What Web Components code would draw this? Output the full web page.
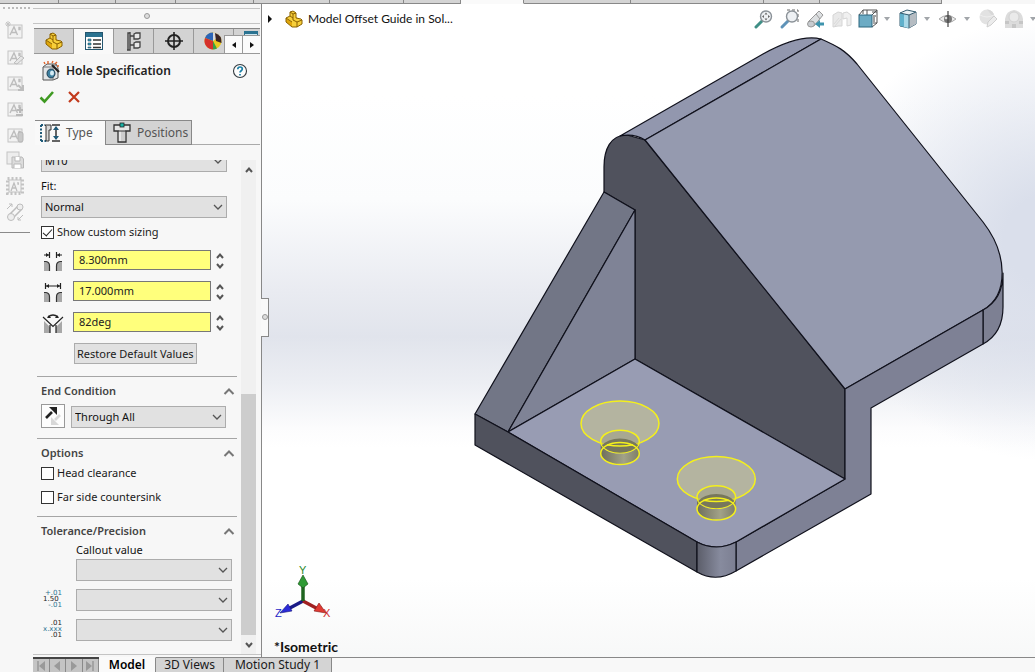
<!DOCTYPE html>
<html lang="en">
<head>
<meta charset="utf-8">
<meta name="viewport" content="width=device-width, initial-scale=1">
<title>Hole Specification</title>
<style>
  html, body { height: 100%; margin: 0; }
  body { font: 11px/20px "Noto Sans", "Open Sans", sans-serif; color: #1a1a1a; background: #f7f7f7; overflow: hidden; }
</style>
</head>
<body>
<cad-app></cad-app>

<script>
/* ---------- icons ---------- */
const PART = `<path d="M1 8 7 12V17L1 12Z" fill="#e0a70c"/><path d="M1 8 5 6 5 2 9 1 11 3 11 7 17 10 17 14 12 17 7 17 7 12Z" fill="#f7cf3a"/>
  <path d="M1 8 5 6V2L8 1 11 3V8L16 9 17 10V14L12 17H7L1 12ZM5 6 8 8M8 4 11 3M8 4V10L12 12 17 10M8 4 5 2M12 12V17M1 8 7 12" fill="none" stroke="#8a6100" stroke-linejoin="round"/>`;
const LENS = (c, e) => `<path d="M2 18 8 12" stroke="${c}" stroke-width="3" stroke-linecap="round"/><circle cx="12" cy="7.500" r="5.500" fill="#eef1f4" stroke="#8b9298" stroke-width="1.400"/>${e}`;
const NOTE = e => `<rect x="2" y="4" width="14" height="13" fill="#f2f2f2" stroke="#c3c3c3"/><path d="M4 14 8 6 11.500 14M5.500 11.500H10M13 6.500v2h1v-2z" fill="none" stroke="#bdbdbd" stroke-width="1.400"/>${e}`;
const DIM = e => `<path d="M1 20V11H3Q7 11 7 15V20ZM19 20V11H17Q13 11 13 15V20Z" fill="#a8a8a8"/><path d="M1 10.500H3Q6.500 11 6.500 15V20M19 10.500H17Q13.500 11 13.500 15V20" fill="none" stroke="#333" stroke-width="1.200"/>${e}`;
const ICONS = {
  part: [18, 18, PART],
  list: [18, 18, `<rect x=".5" y=".5" width="17" height="17" fill="#fff" stroke="#24566f"/><rect x="1" y="1" width="16" height="4" fill="#2b7391"/><path d="M3 7h3v2H3zM3 11h3v2H3zM3 15h3v1H3z" fill="#3aa0bf" stroke="#1f4c60" stroke-width=".6"/><path d="M8 8h8M8 12h8M8 15.500h8" stroke="#333" stroke-width="1.300"/>`],
  config: [16, 20, `<path d="M4 1V19H1M4 2H2V19M4 5H8M4 14H8" fill="none" stroke="#444" stroke-width="1.400"/><path d="M8 3 10 2H14V7L12 8H8ZM8 12 10 11H14V16L12 17H8Z" fill="#e8e8e8" stroke="#444" stroke-width="1.300"/>`],
  target: [18, 18, `<circle cx="9" cy="9" r="6" fill="none" stroke="#222" stroke-width="2"/><path d="M9 0V18M0 9H18" stroke="#222" stroke-width="1.600"/>`],
  ball: [18, 18, `<circle cx="9" cy="9" r="8.500" fill="#e9c81e"/><path d="M9 9 1 6A8.500 8.500 0 0 1 9 .5Z" fill="#2c65b8"/><path d="M9 .5A8.500 8.500 0 0 1 16 4L9 9Z" fill="#d9d9d9"/><path d="M11 1Q18 3 17.500 11L12 9Z" fill="#3a2424"/><path d="M1 6 9 9 9 17.500A8.500 8.500 0 0 1 1 6Z" fill="#d5302b"/><path d="M9 9V17.500A8.500 8.500 0 0 0 13 16.500Z" fill="#37a046"/>`],
  display: [14, 10, `<rect x=".5" y=".5" width="13" height="9" fill="#cfe6ef" stroke="#2b7391"/><path d="M1 2H13" stroke="#2b7391" stroke-width="2"/>`],
  wizard: [20, 20, `<path d="M2 6 6 3H15L17 7V17L12 19H2Z" fill="#e3e5e7" stroke="#555"/><path d="M2 6H12V19M12 6 16 3" fill="none" stroke="#777"/><ellipse cx="10" cy="12.500" rx="4" ry="4.500" fill="#3d7fa0" stroke="#1d3d50"/><ellipse cx="11" cy="12" rx="2" ry="2.500" fill="#d6ecf5"/><path d="M11 4 18 11" stroke="#222" stroke-width="2.200"/><path d="M3 1l1 2M7 0v3M12 0l-1 2M16 1l-2 2M18 5h-2" stroke="#e0622a" stroke-width="1.400"/>`],
  help: [16, 16, `<circle cx="8" cy="8" r="6.500" fill="#fdfdfd" stroke="#333b40" stroke-width="1.100"/><path d="M5.800 6.200C5.800 3.200 10.300 3.400 10.300 6 10.300 7.700 8 7.800 8 9.600M8 11V12.500" fill="none" stroke="#1a7fa6" stroke-width="1.700"/>`],
  ok: [16, 14, `<path d="M1.500 7.500 5.500 11.500 14 2" fill="none" stroke="#3f9a22" stroke-width="2.600"/>`],
  cancel: [12, 12, `<path d="M1 1 11 11M11 1 1 11" stroke="#c23a1c" stroke-width="2.200"/>`],
  type: [20, 18, `<path d="M1 1V18M1 1H5M1 17H6" stroke="#1f5a78" stroke-width="2" stroke-dasharray="2 1.500"/><path d="M5 1H11V6H9V17H6V2Z" fill="#d8d8d8" stroke="#333"/><path d="M12 1H20M12 17H20M16 3V15" stroke="#333" stroke-width="1.500"/><path d="M16 2 19 6H13ZM16 16 19 12H13Z" fill="#1f5a78"/>`],
  positions: [18, 20, `<path d="M1 2H17V8H13V19H5V8H1Z" fill="#e6e6e6" stroke="#333" stroke-width="1.300"/><path d="M9 8V18M11 8V18" stroke="#b5b5b5"/><rect x="7" y="0" width="4" height="4" fill="#19b3a6" stroke="#222" stroke-width=".8"/><path d="M5 8H13" stroke="#333"/>`],
  chev: [10, 6, `<path d="M1 1 5 5 9 1" fill="none" stroke="#555" stroke-width="1.300"/>`],
  chevUp: [12, 7, `<path d="M1.500 6 6 1.500 10.500 6" fill="none" stroke="#777" stroke-width="2"/>`],
  spinUp: [8, 6, `<path d="M1 5 4 1.500 7 5" fill="none" stroke="#555" stroke-width="2"/>`],
  spinDown: [8, 6, `<path d="M1 1 4 4.500 7 1" fill="none" stroke="#555" stroke-width="2"/>`],
  left: [4, 6, `<path d="M4 0V6L0 3Z" fill="#111"/>`],
  right: [4, 6, `<path d="M0 0V6L4 3Z" fill="#111"/>`],
  tree: [4, 8, `<path d="M0 0V8L4 4Z" fill="#111"/>`],
  caret: [6, 4, `<path d="M0 0H6L3 4Z" fill="#a2a6aa"/>`],
  flip: [20, 20, `<path d="M3 12 9 6" stroke="#222" stroke-width="2.600"/><path d="M6 1H14V9Z" fill="#222"/><path d="M17 9 12 14" stroke="#d8d8d8" stroke-width="2.600"/><path d="M8 11V19H16Z" fill="#d8d8d8"/>`],
  dimA: [20, 20, DIM(`<path d="M1 4H6M6.500 1V7M19 4H14M13.500 1V7" stroke="#222" stroke-width="1.200"/><path d="M6 4 3 2V6ZM14 4 17 2V6Z" fill="#222"/>`)],
  dimB: [20, 20, DIM(`<path d="M3 4H17M2.500 1V7M17.500 1V7" stroke="#222" stroke-width="1.200"/><path d="M3 4 6 2V6ZM17 4 14 2V6Z" fill="#222"/>`)],
  dimC: [20, 20, `<path d="M1 20V8L7 14V20ZM19 20V8L13 14V20Z" fill="#a8a8a8"/><path d="M0 4 10 13.500 20 4M7 12V20M13 12V20" fill="none" stroke="#222" stroke-width="1.200"/><path d="M5 4Q10 0 15 4" fill="none" stroke="#222" stroke-width="1.300"/><path d="M4 5 6 2 8 5ZM16 5 14 2 12 5Z" fill="#222"/>`],
  // view toolbar
  zoomFit: [20, 20, LENS('#3f8f86', `<path d="M12 3.500 13.500 5.500H10.500ZM12 11.500 13.500 9.500H10.500ZM8 7.500 10 6V9ZM16 7.500 14 6V9Z" fill="#666"/>`)],
  zoomArea: [20, 20, `<path d="M7 1H18V14" fill="none" stroke="#666" stroke-dasharray="3 2"/>` + LENS('#5f93b8', '')],
  prevView: [20, 20, `<path d="M2 13 13 2 17 6 8 17Z" fill="#dcdfe1" stroke="#999"/><ellipse cx="5" cy="15" rx="3.500" ry="3" fill="#c8ccd0" stroke="#999"/><path d="M10 5 14 10" stroke="#999"/><path d="M18 13.500H14V11L9 15 14 19V16.500H18Z" fill="#3e94ad"/>`],
  section: [20, 20, `<path d="M1 6 6 3 10 4V17H6L1 18Z" fill="#e9e9e9" stroke="#d5d5d5"/><path d="M11 4 15 3 19 6V16L15 17V9L11 10Z" fill="#f0f0f0" stroke="#d5d5d5"/><path d="M2 15 7 9M2 18 9 10" stroke="#d9d9d9"/>`],
  orient: [20, 20, `<path d="M5 5V1H19V14H15M1 6 5 1M14 6 19 1M14 18 19 14M9 6V1M14 3H19" fill="none" stroke="#555"/><rect x="1" y="6" width="13" height="12" fill="#6cabc4" stroke="#2c667e"/><path d="M16 8V13M15 7h3" stroke="#444"/>`],
  style: [18, 20, `<path d="M1 4 8 1 17 3V15L10 19 1 17Z" fill="#e8f1f5" stroke="#345c70"/><path d="M1 4 10 6V19L1 17Z" fill="#5fb0cb"/><path d="M5 5 10 6V19L5 18Z" fill="#a8d8e8"/><path d="M10 6 17 3V15L10 19Z" fill="#b5bcc2"/><path d="M1 4 10 6 17 3M10 6V19" fill="none" stroke="#345c70"/>`],
  eye: [20, 16, `<path d="M1 8Q9 1 18 8 10 15 1 8Z" fill="#ececec" stroke="#aaa"/><circle cx="10" cy="8" r="4" fill="#777"/><path d="M10 0V16" stroke="#444" stroke-width="1.200"/><circle cx="8" cy="7" r="1.300" fill="#ddd"/>`],
  appear: [20, 20, `<circle cx="9" cy="8" r="7.500" fill="#e2e2e2"/><path d="M9 .5A7.500 7.500 0 0 1 16.500 8Q12 5 9 .5Z" fill="#d8d8d8"/><path d="M2 6Q9 10 16 6" fill="none" stroke="#efefef"/><path d="M9 18 10 13 16 7 19 10 13 16Z" fill="#ececec" stroke="#cfcfcf"/>`],
  sceneBg: [20, 20, `<path d="M1 19V10Q2 2 10 1 18 2 19 10V19Z" fill="#dcdcdc"/><path d="M1 12H5V15H1ZM8 15H12V19H8ZM15 12H19V15H15Z" fill="#c6c6c6"/><circle cx="10" cy="8" r="5" fill="#eaeaea" stroke="#d2d2d2"/>`],
  // annotation rail
  n1: [18, 18, NOTE(`<path d="M2 0V6M-1 3H5M0 1 4 5M4 1 0 5" stroke="#c6c6c6"/>`)],
  n2: [18, 18, NOTE(`<path d="M8 16 15 9 18 11 11 17Z" fill="#e6e6e6" stroke="#bdbdbd"/>`)],
  n3: [18, 18, NOTE(`<path d="M12 12 16 16M17 12V17H12" stroke="#bdbdbd" stroke-width="2" fill="none"/>`)],
  n4: [18, 18, NOTE(`<path d="M14 8V14M11 11H17M10 16H17" stroke="#b9b9b9" stroke-width="2"/>`)],
  n5: [18, 18, NOTE(`<rect x="12" y="7" width="5" height="10" rx="2" fill="#c9c9c9" stroke="#b5b5b5"/>`)],
  n6: [18, 18, `<rect x="1" y="1" width="12" height="12" fill="#ededed" stroke="#c3c3c3"/><path d="M6 6H16L17.500 8V17H6Z" fill="#dcdcdc" stroke="#b9b9b9"/><path d="M9 6V10H14V6M8 17V13H15V17" fill="#fff" stroke="#b9b9b9"/>`],
  n7: [18, 18, `<rect x="1.500" y="1.500" width="15" height="15" fill="none" stroke="#c3c3c3" stroke-width="3" stroke-dasharray="2 2"/><rect x="3" y="3" width="12" height="12" fill="#f4f4f4" stroke="#c3c3c3"/><path d="M5 14 8 6 11 14M6 11H10M12 5v2h1" fill="none" stroke="#bdbdbd" stroke-width="1.300"/>`],
  n8: [18, 18, `<path d="M3 12 13 2M6 16 16 6" stroke="#bdbdbd" stroke-width="1.500"/><circle cx="14" cy="4" r="3" fill="#eee" stroke="#bdbdbd"/><circle cx="5" cy="14" r="3.500" fill="#eee" stroke="#bdbdbd"/><path d="M1 6 6 1M3 1H6V4M17 12 12 17M15 17H12V14" fill="none" stroke="#bdbdbd"/>`],
  // sheet navigation
  first: [10, 10, `<path d="M2 0V10" stroke="#999" stroke-width="1.500"/><path d="M9 0V10L3 5Z" fill="#999"/>`],
  prev: [10, 10, `<path d="M8 0V10L2 5Z" fill="#999"/>`],
  next: [10, 10, `<path d="M2 0V10L8 5Z" fill="#999"/>`],
  last: [10, 10, `<path d="M8 0V10" stroke="#999" stroke-width="1.500"/><path d="M1 0V10L7 5Z" fill="#999"/>`]
};

const BASE = `
  *, *::before { box-sizing: border-box; }
  button, select, input { font: inherit; color: inherit; margin: 0; padding: 0; border-radius: 0; }
  button { background: none; border: 0; display: grid; place-items: center; }
`;
class Base extends HTMLElement {
  connectedCallback() {
    if (this.shadowRoot) return;
    const root = this.attachShadow({ mode: 'open' });
    root.innerHTML = `<style>${BASE}${this.css()}</style>${this.html()}`;
    this.ready(root);
  }
  a(name) { return this.getAttribute(name) || ''; }
  css() { return ''; }
  html() { return ''; }
  ready() {}
}
const def = (name, cls) => customElements.define(name, cls);

def('cad-icon', class extends Base {
  css() { return `:host{display:inline-grid;flex:none} svg{display:block;overflow:visible}`; }
  html() {
    const [w, h, body] = ICONS[this.a('name')];
    return `<svg width="${w}" height="${h}" viewBox="0 0 ${w} ${h}" aria-hidden="true">${body}</svg>`;
  }
});

/* Row of command tabs cut off by the window's top edge */
def('cad-ribbon', class extends Base {
  css() { return `
    :host{display:flex;height:4px;background:#f7f7f7;overflow:hidden}
    i{flex:0 1 auto;background:#d4d4d4;border-right:1px solid #888;border-bottom:1px solid #888}
    i.on{background:#fafafa;border-bottom-color:#fafafa}
    b{flex:1;border-bottom:1px solid transparent}`; }
  html() {
    const w = [59, 57, 60, 78, 76, 74, 57, 63, 107, 133, 56, 122];
    return w.map((n, k) => `<i style="width:${n}px"${k === 7 ? ' class="on"' : ''}></i>`).join('') + '<b></b>';
  }
});

def('cad-rail', class extends Base {
  css() { return `
    :host{display:block;background:#f7f7f7}
    .grip{height:3px;margin:2px 3px 12px 3px;border-bottom:2px dotted #bbb}
    nav{display:grid;gap:8px;justify-content:center;padding-bottom:11px;margin-right:3px;border-bottom:1px solid #8a8a8a}
    button{width:18px;height:18px}`; }
  html() {
    const n = ['New note', 'Edit note', 'Align note', 'Add note', 'Attach note', 'Save note', 'Note block', 'Belt'];
    return `<div class="grip"></div><nav aria-label="Annotations">${n.map((t, k) => `<button aria-label="${t}"><cad-icon name="n${k + 1}"></cad-icon></button>`).join('')}</nav>`;
  }
});

/* Drop-down; "caption" shows its label above the box, "label" only names it */
def('cad-select', class extends Base {
  css() { return `
    :host{display:block;color:#111}
    .box{display:grid;height:20px}
    select{grid-area:1/1;min-width:0;width:100%;height:100%;appearance:none;background:#e1e1e1;border:1px solid #acacac;padding:0 3px}
    label{display:block;line-height:var(--caption-line,20px)}
    cad-icon{grid-area:1/1;justify-self:end;align-self:center;margin-right:4px;pointer-events:none}`; }
  html() {
    const caption = this.a('caption');
    return `${caption ? `<label for="s">${caption}</label>` : ''}<div class="box"><select id="s" ${caption ? '' : `aria-label="${this.a('label')}"`}><option>${this.a('value')}</option></select><cad-icon name="chev"></cad-icon></div>`;
  }
});

def('cad-check', class extends Base {
  css() { return `
    :host{display:flex;align-items:center;height:20px}
    label{display:flex;align-items:center;gap:3px}
    input{appearance:none;width:13px;height:13px;background:#fff;border:1px solid #333;display:grid;place-items:center}
    input:checked::before{content:"";width:9px;height:5px;border:solid #222;border-width:0 0 1px 1px;transform:translateY(-1px) rotate(-48deg)}`; }
  html() { return `<label><input type="checkbox" ${this.hasAttribute('checked') ? 'checked' : ''}><slot></slot></label>`; }
});

def('cad-dimension', class extends Base {
  css() { return `
    :host{display:grid;grid-template-columns:32px 1fr 16px;align-items:center;height:20px}
    cad-icon.pic{margin-left:2px;margin-top:3px}
    input{width:100%;min-width:0;height:20px;background:#ffff7c;border:1px solid #777;padding:0 5px;color:#222}
    .spin{display:grid;gap:2px;justify-content:end;padding:3px 3px 0 0}
    button{width:9px;height:8px}`; }
  html() { return `<cad-icon class="pic" name="${this.a('icon')}"></cad-icon><input aria-label="${this.a('label')}" value="${this.a('value')}">
    <div class="spin"><button aria-label="Increase"><cad-icon name="spinUp"></cad-icon></button><button aria-label="Decrease"><cad-icon name="spinDown"></cad-icon></button></div>`; }
});

def('cad-group', class extends Base {
  css() { return `
    :host{display:block;border-top:1px solid #a5a5a5;padding:4px 0 0 4px}
    header{display:flex;align-items:center;justify-content:space-between;height:20px;padding-right:2px}
    h2{margin:0;font-size:11px;line-height:20px;font-weight:600;color:#444}
    button{width:12px;height:12px}`; }
  html() { return `<header><h2>${this.a('heading')}</h2><button aria-label="Collapse ${this.a('heading')}"><cad-icon name="chevUp"></cad-icon></button></header><slot></slot>`; }
});

def('cad-panel', class extends Base {
  css() { return `
    :host{display:flex;flex-direction:column;min-height:0;background:#f7f7f7;border-right:1px solid #888;position:relative}
    .split{height:16px;margin:4px 1px 4px 0;border:solid #c4c4c4;border-width:1px 0;display:grid;place-items:center;flex:none}
    .split i,.handle i{width:6px;height:6px;border:1px solid #999;border-radius:50%;background:#ddd}
    .managers{display:flex;height:26px;margin:0 1px;overflow:hidden;position:relative;flex:none;border-top:1px solid #888}
    .managers>button{flex:none;width:40px;background:#d3d3d3;border-right:1px solid #999;border-bottom:1px solid #999}
    .managers>button[aria-selected=true]{background:#f9f9f9;border-bottom-color:#f9f9f9}
    .managers>button:nth-child(n+5){justify-content:start;padding-left:10px}
    .managers>button:nth-child(6){align-content:start;padding-top:2px}
    .scroll-tabs{position:absolute;right:0;bottom:0;display:flex;height:19px}
    .scroll-tabs button{width:18px;background:#fbfbfb;border:1px solid #999;border-width:1px 0 1px 1px}
    .title{display:flex;align-items:center;gap:5px;height:20px;margin:7px 13px 0 8px;flex:none}
    .title h1{flex:1;margin:0;font-size:12px;line-height:20px;font-weight:600;color:#222}
    .actions{display:flex;align-items:center;gap:13px;height:20px;margin:6px 0 0 6px;flex:none}
    .pages{display:flex;height:25px;margin:13px 1px 0 2px;flex:none}
    .pages button{display:flex;align-items:center;gap:6px;font-size:12px;color:#555;border-top:1px solid #888;padding:0 5px}
    .pages button[aria-selected=true]{width:70px;background:#f9f9f9}
    .pages button+button{width:87px;background:#d3d3d3;border:1px solid #888;padding:0 7px}
    .pages::after{content:"";flex:1;border-bottom:1px solid #aaa}
    .body{flex:1;min-height:0;display:flex;margin:15px 5px 0 0}
    .scroll{flex:1;min-width:0;overflow-y:auto;scrollbar-width:none;padding:0 4px 30px}
    .fields{padding:0 10px 12px 4px}
    .fields>*{margin-top:6px}
    .fields>cad-select:first-child{margin-top:1px}
    .fields>cad-dimension+cad-dimension{margin-top:11px}
    .fields .restore{height:21px;margin:13px 0 0 33px;padding:0 2px;background:#e1e1e1;border:1px solid #acacac;white-space:nowrap}
    .end{display:grid;grid-template-columns:24px 1fr;gap:6px;align-items:center;margin:3px 11px 10px 0}
    .end button{height:24px;background:#fdfdfd;border:1px solid #999}
    .opts{display:grid;gap:4px;padding-bottom:9px}
    .tol{display:grid;grid-template-columns:35px 1fr;row-gap:10px;align-items:center;padding-right:5px}
    .tol cad-select{grid-column:2;--caption-line:18px}
    .tol small{display:grid;font:7px/6px "DejaVu Sans",sans-serif;color:#222;width:24px;padding:0 3px 0 2px}
    .tol small b{font-weight:400} .tol small i{font-style:normal;text-align:right} .tol .c{color:#2b7391}
    .bar{width:15px;flex:none;display:flex;flex-direction:column;background:#f0f0f0}
    .bar button{height:20px;flex:none}
    .bar .room{flex:1;min-height:0;display:flex;flex-direction:column;justify-content:end}
    .bar .thumb{height:53%;background:#cdcdcd}
    .foot{height:3px;flex:none;border-top:1px solid #c4c4c4;margin-top:-1px}
    .handle{position:absolute;left:100%;top:45%;width:8px;height:39px;background:#f9f9f9;border:1px solid #888;border-left:0;display:grid;place-items:center}`; }
  html() { return `
    <div class="split"><i></i></div>
    <div class="managers" role="tablist">
      <button role="tab" aria-label="Feature tree"><cad-icon name="part"></cad-icon></button>
      <button role="tab" aria-selected="true" aria-label="Properties"><cad-icon name="list"></cad-icon></button>
      <button role="tab" aria-label="Configurations"><cad-icon name="config"></cad-icon></button>
      <button role="tab" aria-label="Dimensions"><cad-icon name="target"></cad-icon></button>
      <button role="tab" aria-label="Appearances"><cad-icon name="ball"></cad-icon></button>
      <button role="tab" aria-label="Display"><cad-icon name="display"></cad-icon></button>
      <div class="scroll-tabs"><button aria-label="Scroll left"><cad-icon name="left"></cad-icon></button><button aria-label="Scroll right"><cad-icon name="right"></cad-icon></button></div>
    </div>
    <div class="title"><cad-icon name="wizard"></cad-icon><h1>Hole Specification</h1><button aria-label="Help"><cad-icon name="help"></cad-icon></button></div>
    <div class="actions"><button aria-label="OK"><cad-icon name="ok"></cad-icon></button><button aria-label="Cancel"><cad-icon name="cancel"></cad-icon></button></div>
    <div class="pages" role="tablist"><button role="tab" aria-selected="true"><cad-icon name="type"></cad-icon>Type</button><button role="tab"><cad-icon name="positions"></cad-icon>Positions</button></div>
    <div class="body">
      <div class="scroll">
        <div class="fields">
          <cad-select label="Size" value="M10"></cad-select>
          <cad-select caption="Fit:" value="Normal"></cad-select>
          <cad-check checked>Show custom sizing</cad-check>
          <cad-dimension icon="dimA" label="Through hole diameter" value="8.300mm"></cad-dimension>
          <cad-dimension icon="dimB" label="Countersink diameter" value="17.000mm"></cad-dimension>
          <cad-dimension icon="dimC" label="Countersink angle" value="82deg"></cad-dimension>
          <button class="restore">Restore Default Values</button>
        </div>
        <cad-group heading="End Condition">
          <div class="end"><button aria-label="Reverse direction"><cad-icon name="flip"></cad-icon></button><cad-select label="End condition" value="Through All"></cad-select></div>
        </cad-group>
        <cad-group heading="Options">
          <div class="opts"><cad-check>Head clearance</cad-check><cad-check>Far side countersink</cad-check></div>
        </cad-group>
        <cad-group heading="Tolerance/Precision">
          <div class="tol">
            <cad-select caption="Callout value"></cad-select>
            <small><i class="c">+.01</i><b>1.50</b><i class="c">-.01</i></small><cad-select label="Tolerance type"></cad-select>
            <small><i>.01</i><b class="c">x.xxx</b><i>.01</i></small><cad-select label="Precision"></cad-select>
          </div>
        </cad-group>
      </div>
      <div class="bar"><button aria-label="Scroll up"><cad-icon name="spinUp"></cad-icon></button><div class="room"><div class="thumb"></div></div><button aria-label="Scroll down"><cad-icon name="spinDown"></cad-icon></button></div>
    </div>
    <div class="foot"></div>
    <div class="handle"><i></i></div>`; }
  ready(root) { root.querySelector('.scroll').scrollTop = 11; }
});

/* The bracket, drawn as an isometric shaded solid */
def('cad-part', class extends Base {
  css() { return `:host{display:block;min-width:0;min-height:0} svg{display:block;width:100%;height:100%}`; }
  html() {
    const hole = (x, y) => `<g transform="translate(${x} ${y})" fill="none" stroke="#f4f01c" stroke-width="1.500">
      <ellipse rx="39" ry="22.500" fill="#b4b4a0"/>
      <path d="M-19.300 19V30A19.300 11 0 0 0 19.300 30V19A19.300 11.300 0 0 1 -19.300 19Z" fill="url(#bore)" stroke="none"/>
      <ellipse cy="18" rx="19.300" ry="11.300" fill="#8f8f72" fill-opacity=".3"/>
      <path d="M-18 22A19.300 11 0 0 1 18 22 19.300 11.300 0 0 1 -18 22Z" fill="#77775c" stroke="none"/>
      <path d="M-13 21.200Q0 24 13 21.200"/>
      <ellipse cy="30" rx="19.300" ry="11"/></g>`;
    return `<svg viewBox="262 4 773 653" role="img" aria-label="Bracket model">
      <defs>
        <linearGradient id="round" x1="0" y1="0" x2="1" y2="0"><stop offset="0" stop-color="#5b5d69"/><stop offset=".6" stop-color="#878b9e"/><stop offset="1" stop-color="#7c7f92"/></linearGradient>
        <linearGradient id="bore" x1="0" y1="0" x2="1" y2="0"><stop offset="0" stop-color="#6e6e5c"/><stop offset=".6" stop-color="#a2a288"/><stop offset="1" stop-color="#7d7d68"/></linearGradient>
      </defs>
      <g stroke="#10111c" stroke-width="1.200" stroke-linejoin="round">
        <path d="M604 192V167C604 150 610 135 627 135L645 140 845 389V479L635 359V210Z" fill="#50525d"/>
        <path d="M620 136 763 54C783 43 805 35 821 39L645 140C637 135 630 134 620 136Z" fill="#9297ae"/>
        <path d="M645 140 821 39C837 46 845 50 857 64L983 222C1008 254 1009 295 983 310L845 389Z" fill="#959aaf"/>
        <path d="M983 310C996 303 1003 290 1003 273V307C1003 325 996 337 983 344Z" fill="#7d8093"/>
        <path d="M845 389 983 310V344L871 408V494L736 571V542L845 479Z" fill="#7e8195"/>
        <path d="M475 414 604 192 635 210 508 432Z" fill="#727686"/>
        <path d="M635 210V359L508 432Z" fill="#7f8396"/>
        <path d="M508 432 635 359 845 479 736 542Q716 552 697 542Z" fill="#989cb3"/>
        <path d="M475 414 508 432 697 542V572L475 445Z" fill="#50525d"/>
        <path d="M697 542Q716 552 736 542V571Q716 583 697 572Z" fill="url(#round)"/>
      </g>
      ${hole(620, 423.5)}${hole(716.3, 479)}
    </svg>`;
  }
});

def('cad-triad', class extends Base {
  css() { return `:host{display:block} svg{display:block}`; }
  html() { return `<svg width="60" height="60" viewBox="274 562 60 60" role="img" aria-label="Axes">
    <path d="M303 600 288 608" stroke="#1a1a86" stroke-width="3.500"/><path d="M280 612 288 603 292 610Z" fill="#2b2bd8" stroke="#14147a" stroke-width=".6"/>
    <path d="M303 600 318 608" stroke="#a02020" stroke-width="3.500"/><path d="M326 612 314 610 319 602Z" fill="#e03a32" stroke="#7d1414" stroke-width=".6"/>
    <path d="M303 600V584" stroke="#1f641f" stroke-width="3.500"/><path d="M303 574 308 583 303 587 298 583Z" fill="#2f9a35" stroke="#104a12" stroke-width=".6"/>
    <g font-family="Liberation Sans" font-size="11"><text x="299" y="573" fill="#2c8a2c">Y</text><text x="275" y="616" fill="#2626c8">Z</text><text x="323" y="616" fill="#d02828">X</text></g></svg>`; }
});

def('cad-viewbar', class extends Base {
  css() { return `
    :host{display:flex;align-items:center;height:20px;margin-right:-3px}
    button{width:20px;height:20px;margin-right:6px}
    button.drop{width:10px;margin:0 6px 0 -2px}
    button.drop:last-child{margin:0 0 0 -2px}`; }
  html() {
    const items = ['zoomFit|Zoom to fit', 'zoomArea|Zoom to area', 'prevView|Previous view', 'section|Section view', 'orient|View orientation|d', 'style|Display style|d', 'eye|Hide or show items|d', 'appear|Edit appearance', 'sceneBg|Apply scene|d'];
    return items.map(s => { const [n, t, d] = s.split('|');
      return `<button aria-label="${t}"><cad-icon name="${n}"></cad-icon></button>` + (d ? `<button class="drop" aria-label="${t} menu"><cad-icon name="caret"></cad-icon></button>` : ''); }).join('');
  }
});

def('cad-viewport', class extends Base {
  css() { return `
    :host{display:grid;grid-template-rows:minmax(0,1fr);grid-template-columns:minmax(0,1fr);min-width:0;min-height:0;overflow:hidden;
      background:
        radial-gradient(ellipse 30% 34% at 102% 36%, #dadfeb 0 20%, #dadfeb00 100%),
        linear-gradient(#fff 0, #fff 14%, #fbfcfd 30%, #e9ebf1 44%, #e1e4ec 51%, #eceef3 58%, #fcfcfd 65%, #fff 68%, #fff 88%, #f7f8f8 100%)}
    cad-part,.hud{grid-area:1/1}
    .hud{display:grid;grid-template-rows:auto 1fr auto;min-width:0}
    .top{display:flex;justify-content:space-between;align-items:center;padding:5px 0 0 6px}
    .tree{display:flex;align-items:center;font:12px/20px Lato,sans-serif;color:#111;gap:5px}
    .tree button{width:4px;margin-right:8px}
    .low{grid-row:3;padding:0 12px}
    .low p{margin:15px 0 0;padding-bottom:1px;font:700 14px/18px Lato,sans-serif;color:#111}`; }
  html() { return `<cad-part></cad-part><div class="hud">
    <div class="top"><div class="tree"><button aria-label="Expand tree"><cad-icon name="tree"></cad-icon></button><cad-icon name="part"></cad-icon><span>Model Offset Guide in Sol...</span></div><cad-viewbar></cad-viewbar></div>
    <div class="low"><cad-triad></cad-triad><p>*Isometric</p></div></div>`; }
});

def('cad-sheets', class extends Base {
  css() { return `
    :host{display:flex;height:15px;background:#f8f8f8;overflow:hidden}
    .nav{display:flex;width:66px;flex:none;border-top:2px solid #444;background:#bcbcbc}
    .nav button{flex:1;border-right:1px solid #8a8a8a;background:#c4c4c4}
    .tab{font-size:12px;line-height:14px;display:block;flex:none;background:#d4d4d4;border:solid #888;border-width:1px 1px 0 0;height:15px;white-space:nowrap}
    .tab.on{background:#fafafa;font-weight:600;border-top-color:#fafafa;color:#000}
    .rest{flex:1;border-top:1px solid #888}`; }
  html() { return `<div class="nav">${['first', 'prev', 'next', 'last'].map(n => `<button aria-label="${n} sheet"><cad-icon name="${n}"></cad-icon></button>`).join('')}</div>
    <button class="tab on" style="width:57px">Model</button><button class="tab" style="width:68px">3D Views</button><button class="tab" style="width:108px">Motion Study 1</button><div class="rest"></div>`; }
});

def('cad-app', class extends Base {
  css() { return `
    :host{display:grid;height:100vh;grid-template:4px minmax(0,1fr) 15px / 33px 229px minmax(0,1fr)}
    cad-ribbon{grid-column:1/-1}
    cad-rail{grid-row:2/4}
    cad-sheets{grid-column:2/-1}`; }
  html() { return `<cad-ribbon></cad-ribbon><cad-rail></cad-rail><cad-panel></cad-panel><cad-viewport></cad-viewport><cad-sheets></cad-sheets>`; }
});
</script>
</body>
</html>
